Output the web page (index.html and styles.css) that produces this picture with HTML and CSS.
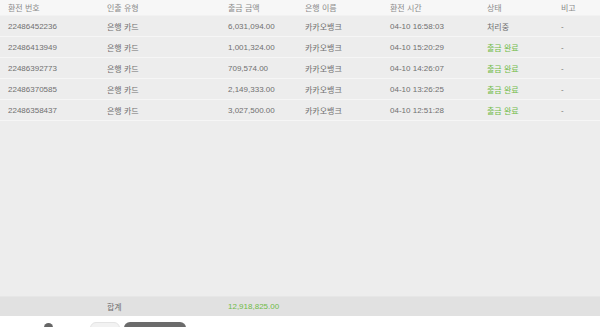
FILE: index.html
```html
<!DOCTYPE html>
<html lang="ko">
<head>
<meta charset="utf-8">
<link rel="stylesheet" href="styles.css">
</head>
<body>
<div class="page">
  <div class="table">
    <div class="row head">
      <div class="c c1">환전 번호</div><div class="c c2">인출 유형</div><div class="c c3">출금 금액</div><div class="c c4">은행 이름</div><div class="c c5">환전 시간</div><div class="c c6">상태</div><div class="c c7">비고</div>
    </div>
    <div class="row">
      <div class="c c1">22486452236</div><div class="c c2">은행 카드</div><div class="c c3">6,031,094.00</div><div class="c c4">카카오뱅크</div><div class="c c5">04-10 16:58:03</div><div class="c c6">처리중</div><div class="c c7">-</div>
    </div>
    <div class="row">
      <div class="c c1">22486413949</div><div class="c c2">은행 카드</div><div class="c c3">1,001,324.00</div><div class="c c4">카카오뱅크</div><div class="c c5">04-10 15:20:29</div><div class="c c6 ok">출금 완료</div><div class="c c7">-</div>
    </div>
    <div class="row">
      <div class="c c1">22486392773</div><div class="c c2">은행 카드</div><div class="c c3">709,574.00</div><div class="c c4">카카오뱅크</div><div class="c c5">04-10 14:26:07</div><div class="c c6 ok">출금 완료</div><div class="c c7">-</div>
    </div>
    <div class="row">
      <div class="c c1">22486370585</div><div class="c c2">은행 카드</div><div class="c c3">2,149,333.00</div><div class="c c4">카카오뱅크</div><div class="c c5">04-10 13:26:25</div><div class="c c6 ok">출금 완료</div><div class="c c7">-</div>
    </div>
    <div class="row">
      <div class="c c1">22486358437</div><div class="c c2">은행 카드</div><div class="c c3">3,027,500.00</div><div class="c c4">카카오뱅크</div><div class="c c5">04-10 12:51:28</div><div class="c c6 ok">출금 완료</div><div class="c c7">-</div>
    </div>
  </div>
  <div class="row total">
    <div class="c c1"></div><div class="c c2">합계</div><div class="c c3 ok">12,918,825.00</div>
  </div>
  <div class="pager">
    <span class="dot"></span>
    <span class="btn-light"></span>
    <span class="btn-dark"></span>
  </div>
</div>
</body>
</html>
```
FILE: styles.css
```css
html, body { margin: 0; padding: 0; }
body {
  width: 600px;
  height: 327px;
  overflow: hidden;
  background: #fff;
  font-family: "Liberation Sans", "Noto Sans CJK KR", sans-serif;
  font-size: 8px;
  color: #707070;
}
.page { display: flex; flex-direction: column; height: 327px; }
.table {
  flex: none;
  height: 296px;
  background: #ededed;
  display: flex;
  flex-direction: column;
}
.row {
  flex: none;
  display: flex;
  align-items: center;
  height: 20px;
  border-bottom: 1px solid #f6f6f6;
  box-sizing: content-box;
}
.row.head {
  height: 15px;
  background: #f7f7f7;
  color: #8a8a8a;
  border-bottom: 1px solid #f2f2f2;
}
.c { white-space: nowrap; flex: none; }
.c1 { width: 99px; padding-left: 8px; }
.c2 { width: 121px; }
.c3 { width: 77px; }
.c4 { width: 85px; }
.c5 { width: 97px; }
.c6 { width: 74px; }
.c7 { width: 30px; }
.ok { color: #70bb48; }
.row.total {
  height: 19px;
  background: #e1e1e1;
  border-top: 1px solid #e6e6e6;
  border-bottom: none;
}
.pager {
  flex: none;
  display: flex;
  align-items: flex-start;
  padding-top: 6px;
  padding-left: 44px;
  height: 20px;
}
.dot { width: 9px; height: 9px; border-radius: 50%; background: #666; margin-top: 1px; }
.btn-light { width: 28px; height: 14px; margin-left: 37px; border-radius: 6px; background: #f2f2f2; border: 1px solid #e4e4e4; }
.btn-dark { width: 62px; height: 14px; margin-left: 4px; border-radius: 6px; background: #6b6b6b; }
```
